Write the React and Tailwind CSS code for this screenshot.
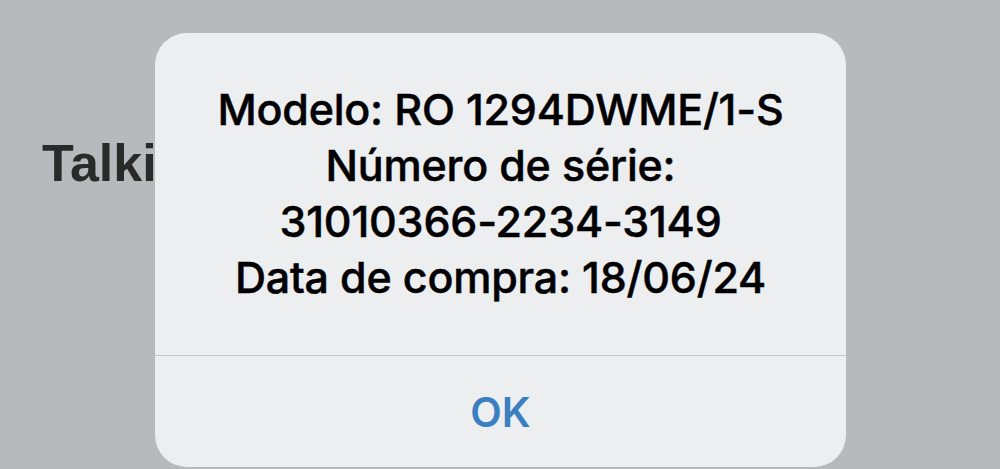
import React from 'react';

const lines = [
  'Modelo: RO 1294DWME/1-S',
  'Número de série:',
  '31010366-2234-3149',
  'Data de compra: 18/06/24',
];

export default function App() {
  return (
    <div className="relative w-[1000px] h-[469px] overflow-hidden bg-[#b7b9bd] font-['Inter',sans-serif]">
      {/* page behind the alert */}
      <div className="pl-[42px] pt-[133px]">
        <h1 className="text-[52px] leading-[60px] font-bold text-[#2a2a2b] font-['Liberation_Sans',sans-serif]">
          Talking
        </h1>
      </div>

      {/* alert */}
      <div className="absolute left-[155px] top-[33px] w-[691px] h-[434px] rounded-[32px] bg-[#eceef0] flex flex-col">
        <div className="pt-[48px] h-[322px] flex flex-col items-center text-center text-black">
          {lines.map((l) => (
            <p key={l} className="text-[43px] leading-[56px] font-medium tracking-[-0.2px] [-webkit-text-stroke:0.5px_black]">
              {l}
            </p>
          ))}
        </div>
        <div className="h-px bg-[#c6c7ca]" />
        <div className="flex-1 flex items-center justify-center">
          <span className="text-[41px] font-semibold text-[#3a7fc2] pt-[2px]">OK</span>
        </div>
      </div>
    </div>
  );
}
